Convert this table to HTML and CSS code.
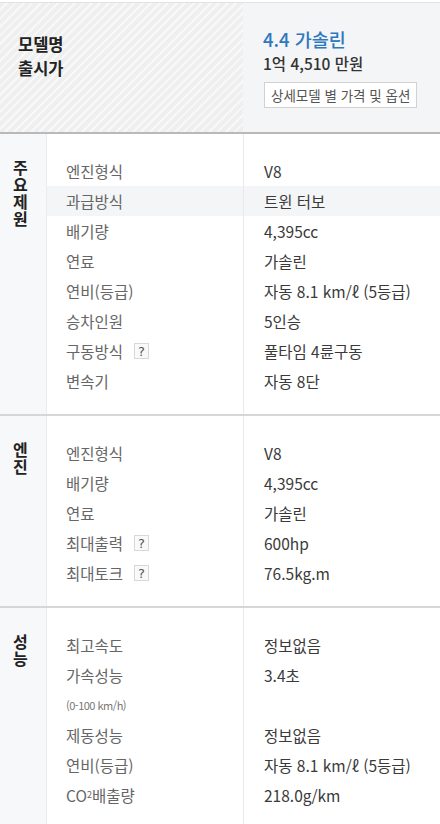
FILE: index.html
```html
<!DOCTYPE html>
<html lang="ko">
<head>
<meta charset="utf-8">
<title>제원</title>
<link rel="stylesheet" href="styles.css">
</head>
<body>
<div class="page">
  <header class="head">
    <div class="head-labels">
      <div>모델명</div>
      <div>출시가</div>
    </div>
    <div class="head-values">
      <div class="model">4.4 가솔린</div>
      <div class="price">1억 4,510 만원</div>
      <button class="opt-btn">상세모델 별 가격 및 옵션</button>
    </div>
  </header>

  <section class="spec">
    <div class="spec-title"><span class="vt">주요제원</span></div>
    <div class="spec-rows">
      <div class="row"><span class="k">엔진형식</span><span class="v">V8</span></div>
      <div class="row hl"><span class="k">과급방식</span><span class="v">트윈 터보</span></div>
      <div class="row"><span class="k">배기량</span><span class="v">4,395cc</span></div>
      <div class="row"><span class="k">연료</span><span class="v">가솔린</span></div>
      <div class="row"><span class="k">연비(등급)</span><span class="v">자동 8.1 km/ℓ (5등급)</span></div>
      <div class="row"><span class="k">승차인원</span><span class="v">5인승</span></div>
      <div class="row"><span class="k">구동방식<i class="help">?</i></span><span class="v">풀타임 4륜구동</span></div>
      <div class="row"><span class="k">변속기</span><span class="v">자동 8단</span></div>
    </div>
  </section>

  <section class="spec">
    <div class="spec-title"><span class="vt">엔진</span></div>
    <div class="spec-rows">
      <div class="row"><span class="k">엔진형식</span><span class="v">V8</span></div>
      <div class="row"><span class="k">배기량</span><span class="v">4,395cc</span></div>
      <div class="row"><span class="k">연료</span><span class="v">가솔린</span></div>
      <div class="row"><span class="k">최대출력<i class="help">?</i></span><span class="v">600hp</span></div>
      <div class="row"><span class="k">최대토크<i class="help">?</i></span><span class="v">76.5kg.m</span></div>
    </div>
  </section>

  <section class="spec">
    <div class="spec-title"><span class="vt">성능</span></div>
    <div class="spec-rows">
      <div class="row"><span class="k">최고속도</span><span class="v">정보없음</span></div>
      <div class="row"><span class="k">가속성능</span><span class="v">3.4초</span></div>
      <div class="row"><span class="k small">(0-100 km/h)</span><span class="v"></span></div>
      <div class="row"><span class="k">제동성능</span><span class="v">정보없음</span></div>
      <div class="row"><span class="k">연비(등급)</span><span class="v">자동 8.1 km/ℓ (5등급)</span></div>
      <div class="row"><span class="k">CO<sup>2</sup>배출량</span><span class="v">218.0g/km</span></div>
    </div>
  </section>
</div>
</body>
</html>
```

FILE: styles.css
```css
* { box-sizing: border-box; }

html, body {
  margin: 0;
  padding: 0;
  background: #ffffff;
}

body {
  font-family: "Noto Sans CJK KR", "Noto Sans", sans-serif;
  color: #333;
  width: 440px;
  overflow: hidden;
}

.page {
  padding-top: 2px;
}

/* ---------- header ---------- */
.head {
  display: grid;
  grid-template-columns: 243px 1fr;
  height: 132px;
  border-top: 1px solid #e2e2e2;
  border-bottom: 2px solid #b9b9b9;
}

.head-labels {
  background: repeating-linear-gradient(135deg, #efefef 0 4px, #f8f8f8 4px 6px);
  padding: 29px 0 0 18px;
  font-size: 16.5px;
  font-weight: 700;
  line-height: 24px;
  color: #222;
}

.head-values {
  background: #f4f5f6;
  padding: 24px 0 0 20px;
  display: flex;
  flex-direction: column;
  align-items: flex-start;
}

.model {
  color: #2e78c0;
  font-size: 18.5px;
  line-height: 25px;
  font-weight: 500;
}

.price {
  font-size: 15.5px;
  line-height: 22px;
  color: #333;
  font-weight: 500;
}

.opt-btn {
  margin-top: 8px;
  margin-left: 1px;
  height: 26px;
  padding: 0 6px;
  background: #fff;
  border: 1px solid #d2d2d2;
  font-family: inherit;
  font-size: 13.5px;
  color: #555;
  line-height: 24px;
  cursor: pointer;
}

/* ---------- spec sections ---------- */
.spec {
  display: flex;
  border-bottom: 2px solid #d6d6d6;
}

.spec-title {
  width: 47px;
  flex: none;
  background: #f7f8f9;
  border-right: 1px solid #ececec;
  padding: 25px 0 0 13px;
}

.vt {
  display: block;
  width: 1em;
  font-size: 16px;
  font-weight: 700;
  line-height: 17px;
  color: #222;
  word-break: break-all;
}

.spec-rows {
  flex: 1;
  padding: 22px 0 18px;
  background: linear-gradient(#e9e9e9, #e9e9e9) 196px 0 / 1px 100% no-repeat;
}

.row {
  display: grid;
  grid-template-columns: 196px 1fr;
  height: 30px;
  align-items: center;
  font-size: 15.5px;
}

.row.hl {
  background: linear-gradient(to right, #f3f5f7 196px, #e9e9e9 196px 197px, #f3f5f7 197px);
}

.k {
  padding-left: 19px;
  color: #666;
  display: flex;
  align-items: center;
  white-space: nowrap;
}

.k.small {
  font-size: 11px;
  letter-spacing: -0.5px;
  color: #777;
}

.k sup {
  font-size: 9px;
  line-height: 0;
}

.v {
  padding-left: 21px;
  color: #3a3a3a;
  white-space: nowrap;
}

.help {
  font-style: normal;
  display: inline-flex;
  align-items: center;
  justify-content: center;
  width: 15px;
  height: 16px;
  margin-left: 11px;
  border: 1px solid #d8d8d8;
  background: #f9f9f9;
  font-size: 13px;
  line-height: 1;
  color: #555;
  font-family: "DejaVu Sans", sans-serif;
}
```
